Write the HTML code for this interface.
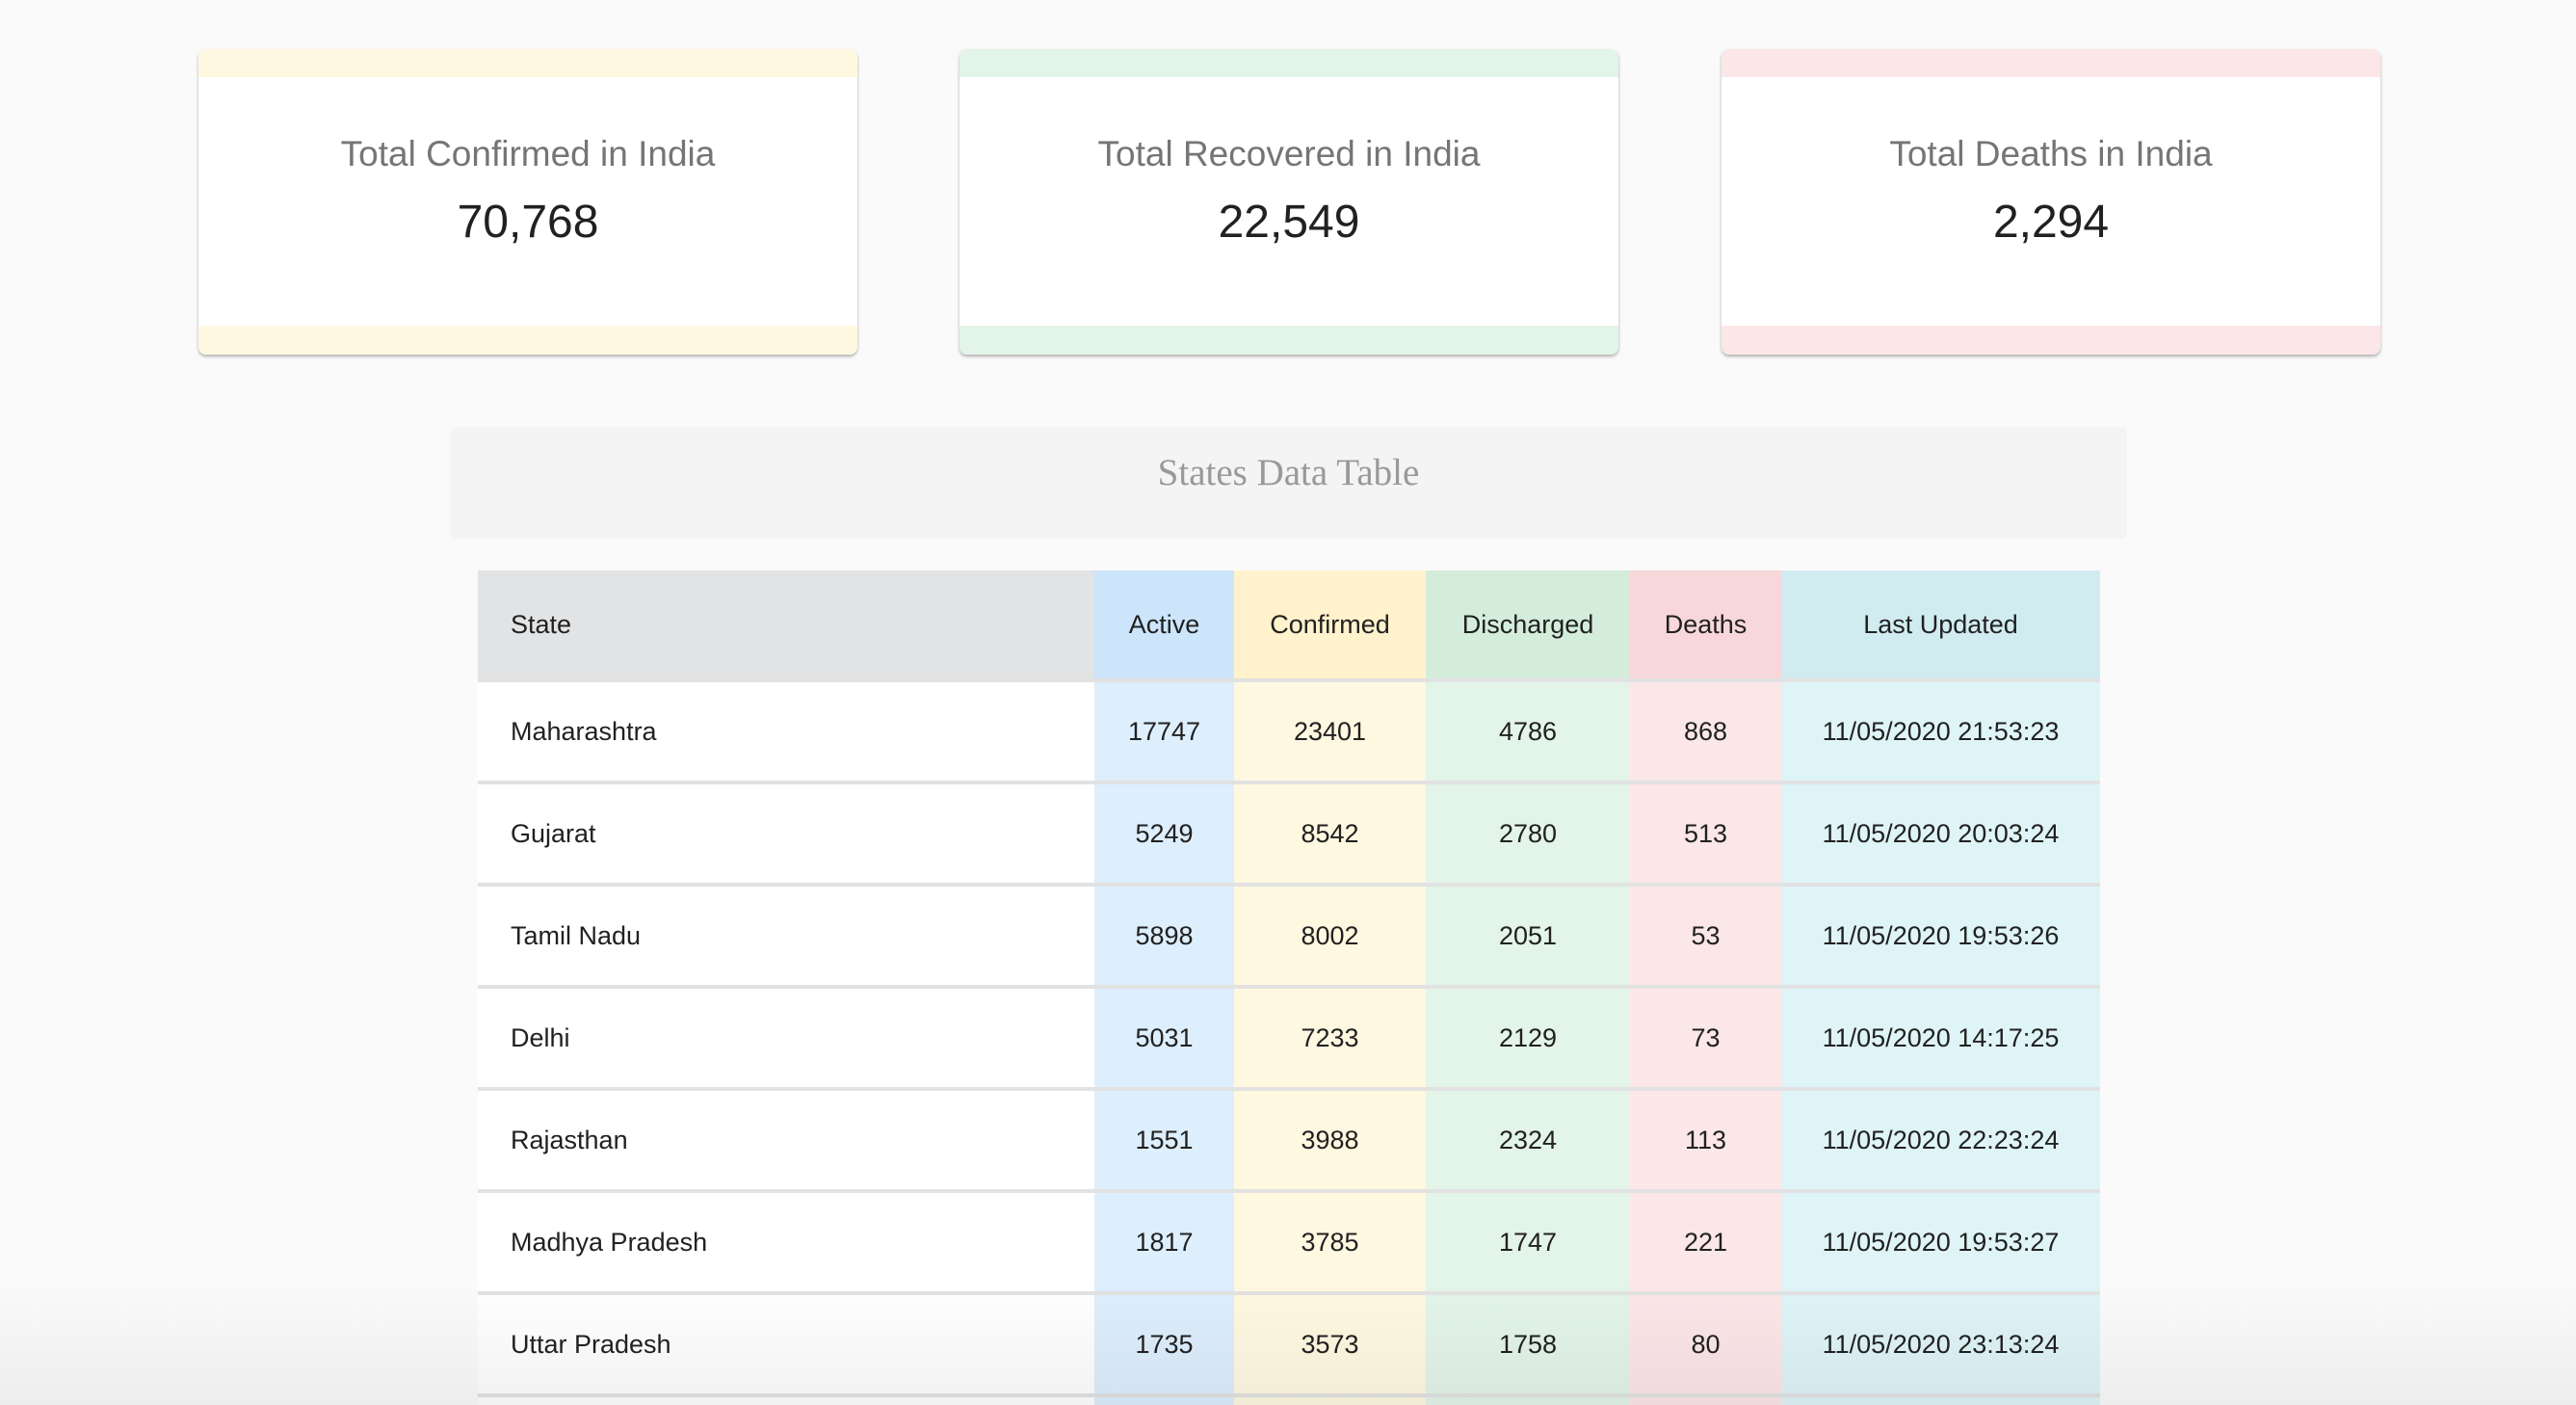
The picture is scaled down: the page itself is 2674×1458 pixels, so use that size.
<!DOCTYPE html>
<html style="width:2674px;height:1458px;overflow:hidden"><head><meta charset="utf-8"><style>
*{box-sizing:border-box;margin:0;padding:0}
body{width:2674px;height:1458px;overflow:hidden;background:#fafafa;font-family:"Liberation Sans",sans-serif;position:relative}
.card{position:absolute;top:51px;width:684px;height:317px;background:#fff;border-radius:8px;overflow:hidden;box-shadow:0 2px 3px rgba(0,0,0,.3)}
.card .t,.card .b{position:absolute;left:0;right:0;height:29px}
.card .t{top:0}.card .b{bottom:0;height:30px}
.card .l{position:absolute;top:88px;width:100%;text-align:center;color:#757575;font-size:37px}
.card .n{position:absolute;top:152px;width:100%;text-align:center;color:#212121;font-size:48px}
.title{position:absolute;left:467px;top:443px;width:1741px;height:116px;background:#f4f4f4;border-radius:6px;text-align:center;font-family:"Liberation Serif",serif;color:#999;font-size:39px;line-height:96px}
.wrap{position:absolute;left:496px;top:592px;width:1684px;height:866px;overflow:hidden}
table{width:1684px;border-collapse:collapse;font-size:27px;color:#212121;background:#fff}
th{height:114px;font-weight:normal;text-align:center}
td{height:106px;text-align:center;border-top:4px solid #e2e2e2}
th:first-child,td:first-child{text-align:left;padding-left:34px}
.c0{width:640px}.c1{width:145px}.c2{width:199px}.c3{width:212px}.c4{width:157px}.c5{width:331px}
th.c0{background:#e2e3e5}th.c1{background:#cce5fb}th.c2{background:#fff2cc}th.c3{background:#d4edda}th.c4{background:#f8d7da}th.c5{background:#d1ecf1}
td.c1{background:#ddeefd}td.c2{background:#fff8e1}td.c3{background:#e3f4e8}td.c4{background:#fbe6e8}td.c5{background:#dff4f7}
.shade{position:absolute;left:0;right:0;top:1330px;height:128px;background:linear-gradient(rgba(0,0,0,0),rgba(0,0,0,.05))}
</style></head><body>
<div class="card" style="left:206px"><div class="t" style="background:#fff8e1"></div><div class="l">Total Confirmed in India</div><div class="n">70,768</div><div class="b" style="background:#fff8e1"></div></div>
<div class="card" style="left:996px"><div class="t" style="background:#e3f4e8"></div><div class="l">Total Recovered in India</div><div class="n">22,549</div><div class="b" style="background:#e3f4e8"></div></div>
<div class="card" style="left:1787px"><div class="t" style="background:#fbe6e8"></div><div class="l">Total Deaths in India</div><div class="n">2,294</div><div class="b" style="background:#fbe6e8"></div></div>
<div class="title">States Data Table</div>
<div class="wrap"><table>
<tr><th class="c0">State</th><th class="c1">Active</th><th class="c2">Confirmed</th><th class="c3">Discharged</th><th class="c4">Deaths</th><th class="c5">Last Updated</th></tr>
<tr><td class="c0">Maharashtra</td><td class="c1">17747</td><td class="c2">23401</td><td class="c3">4786</td><td class="c4">868</td><td class="c5">11/05/2020 21:53:23</td></tr>
<tr><td class="c0">Gujarat</td><td class="c1">5249</td><td class="c2">8542</td><td class="c3">2780</td><td class="c4">513</td><td class="c5">11/05/2020 20:03:24</td></tr>
<tr><td class="c0">Tamil Nadu</td><td class="c1">5898</td><td class="c2">8002</td><td class="c3">2051</td><td class="c4">53</td><td class="c5">11/05/2020 19:53:26</td></tr>
<tr><td class="c0">Delhi</td><td class="c1">5031</td><td class="c2">7233</td><td class="c3">2129</td><td class="c4">73</td><td class="c5">11/05/2020 14:17:25</td></tr>
<tr><td class="c0">Rajasthan</td><td class="c1">1551</td><td class="c2">3988</td><td class="c3">2324</td><td class="c4">113</td><td class="c5">11/05/2020 22:23:24</td></tr>
<tr><td class="c0">Madhya Pradesh</td><td class="c1">1817</td><td class="c2">3785</td><td class="c3">1747</td><td class="c4">221</td><td class="c5">11/05/2020 19:53:27</td></tr>
<tr><td class="c0">Uttar Pradesh</td><td class="c1">1735</td><td class="c2">3573</td><td class="c3">1758</td><td class="c4">80</td><td class="c5">11/05/2020 23:13:24</td></tr>
<tr><td class="c0">West Bengal</td><td class="c1">1363</td><td class="c2">2063</td><td class="c3">499</td><td class="c4">190</td><td class="c5">11/05/2020 20:43:24</td></tr>
</table></div>
<div class="shade"></div>
</body></html>
